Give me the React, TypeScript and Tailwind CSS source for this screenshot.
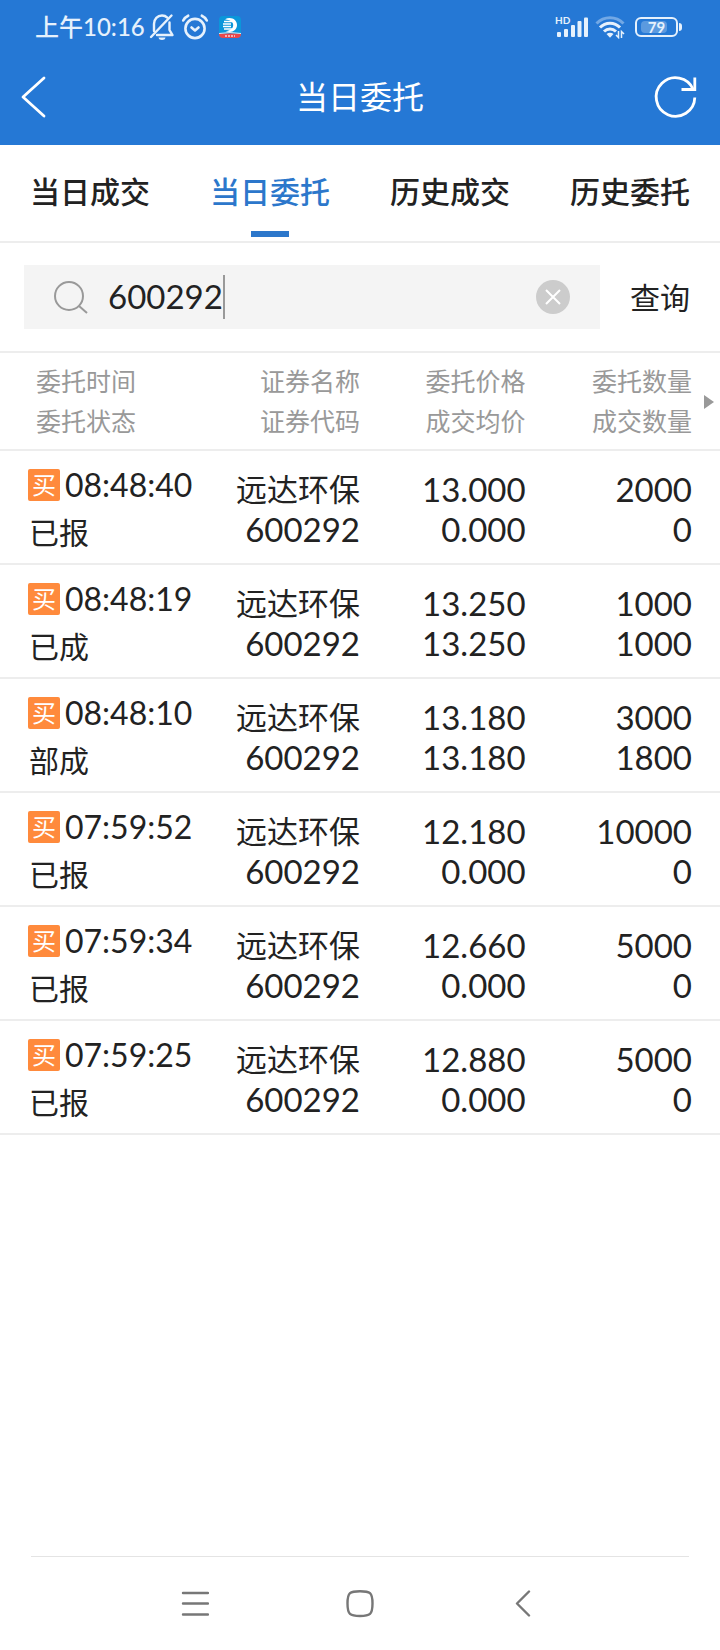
import React, { useState } from 'react';

type Order = {
    time: string;
    status: string;
    name: string;
    code: string;
    price: string;
    avgPrice: string;
    amount: string;
    dealAmount: string;
};

const orders: Order[] = [
    { time: '08:48:40', status: '已报', name: '远达环保', code: '600292', price: '13.000', avgPrice: '0.000', amount: '2000', dealAmount: '0' },
    { time: '08:48:19', status: '已成', name: '远达环保', code: '600292', price: '13.250', avgPrice: '13.250', amount: '1000', dealAmount: '1000' },
    { time: '08:48:10', status: '部成', name: '远达环保', code: '600292', price: '13.180', avgPrice: '13.180', amount: '3000', dealAmount: '1800' },
    { time: '07:59:52', status: '已报', name: '远达环保', code: '600292', price: '12.180', avgPrice: '0.000', amount: '10000', dealAmount: '0' },
    { time: '07:59:34', status: '已报', name: '远达环保', code: '600292', price: '12.660', avgPrice: '0.000', amount: '5000', dealAmount: '0' },
    { time: '07:59:25', status: '已报', name: '远达环保', code: '600292', price: '12.880', avgPrice: '0.000', amount: '5000', dealAmount: '0' },
];

const tabs = ['当日成交', '当日委托', '历史成交', '历史委托'];

const StatusBar: React.FC = () => (
    <div className="flex h-[54px] items-center justify-between pl-[35px] pr-[38px] text-[#e6f1fc]">
        <div className="flex items-center">
            <span className="text-2xl font-medium">上午10:16</span>
            {/* Muted bell */}
            <svg className="ml-1 shrink-0" width="26" height="28" viewBox="0 0 26 28" fill="none" stroke="currentColor" strokeWidth="2.400" strokeLinecap="round" strokeLinejoin="round">
                <path d="M5 18V11C5 6 8.500 2.500 13 2.500C15 2.500 17 3.300 18.300 4.600" />
                <path d="M20.500 9.500V17L23.500 22H8" />
                <path d="M2 24L22.500 2.500" />
                <path d="M9.500 24.500H16.500C16 26.300 15 27 13 27S10 26.300 9.500 24.500Z" fill="currentColor" stroke="none" />
            </svg>
            {/* Alarm */}
            <svg className="ml-[6px] shrink-0" width="28" height="28" viewBox="0 0 28 28" fill="none" stroke="currentColor" strokeWidth="2.600" strokeLinecap="round" strokeLinejoin="round">
                <circle cx="14" cy="15.500" r="9.600" />
                <path d="M10.500 14.500L14 17.500L17.500 14.500" />
                <path d="M2.200 7.500C3.200 5.300 5 3.700 7.200 2.700M25.800 7.500C24.800 5.300 23 3.700 20.800 2.700" />
            </svg>
            {/* Broker app notification */}
            <svg className="ml-[10px] shrink-0" width="22" height="22" viewBox="0 0 22 22">
                <rect width="22" height="22" rx="4" fill="#0b96da" />
                <path d="M0 17.500H22V18A4 4 0 0 1 18 22H4A4 4 0 0 1 0 18Z" fill="#e8474c" />
                <path d="M0 17.500Q11 15.500 22 17.500" stroke="#d7ecf7" strokeWidth="1" fill="none" />
                <path d="M6 3.200C12 .2 18 3.500 18 9S12.500 17.500 6.500 15C11 15 14.200 12.500 14.200 9S11 4.200 6 3.200Z" fill="#fff" />
                <path d="M5 5.500H14M4 8H12M4 10.500H12M5 13H13" stroke="#fff" strokeWidth="1.300" />
                <path d="M6 20H16" stroke="#fbd3d4" strokeWidth="1.500" strokeDasharray="2 1" />
            </svg>
        </div>
        <div className="flex items-center">
            {/* Signal */}
            <svg className="shrink-0" width="34" height="24" viewBox="0 0 34 24" fill="currentColor">
                <text x="0" y="9" fontSize="10" fontWeight="700">HD</text>
                <rect x="2" y="17" width="4" height="5" rx="1" />
                <rect x="9" y="14" width="4" height="8" rx="1" />
                <rect x="16" y="10" width="4" height="12" rx="1" />
                <rect x="22.500" y="6" width="4" height="16" rx="1" />
                <rect x="29" y="2.500" width="4" height="19.500" rx="1" />
            </svg>
            {/* Wifi */}
            <svg className="ml-[6px] shrink-0" width="30" height="24" viewBox="0 0 30 24" fill="none" stroke="currentColor" strokeWidth="3">
                <path d="M1.500 8.500C9 .8 21 .8 28.500 8.500" opacity="0.400" />
                <path d="M5 12.500C10.500 6.800 19.500 6.800 25 12.500" />
                <path d="M9 16.500C12.500 13 17.500 13 21 16.500" />
                <path d="M11.500 19C13.500 17.300 16.500 17.300 18.500 19L15 22.800Z" fill="currentColor" stroke="none" />
                <path d="M23.500 16V22.500L21 20M26.500 23V16.500L29 19" strokeWidth="1.500" />
            </svg>
            {/* Battery */}
            <div className="relative ml-[10px] flex h-5 w-[43px] items-center justify-center rounded-md border-2 border-current">
                <span className="absolute inset-y-[2px] left-1 w-[26px] rounded-sm bg-white/25" />
                <span className="relative text-[15px] font-bold leading-4">79</span>
            </div>
            <span className="ml-px h-2 w-[3px] rounded-r-sm bg-current" />
        </div>
    </div>
);

const OrderRow: React.FC<{ order: Order }> = ({ order }) => (
    <tr className="border-b-2 border-[#ededed] align-top text-[33px] leading-10">
        <td className="pb-2 pl-7 pt-[10px]">
            <div className="flex h-12 items-center gap-[5px] text-[32px]">
                <span className="flex size-8 shrink-0 items-center justify-center rounded-xs bg-[#ff8a3c] text-2xl leading-8 text-white">买</span>
                {order.time}
            </div>
            <div className="pl-px text-[30px] leading-[46px]">{order.status}</div>
        </td>
        <td className="pt-[18px] text-right">
            <div className="text-[31px]">{order.name}</div>
            <div>{order.code}</div>
        </td>
        <td className="pt-[18px] text-right">
            <div>{order.price}</div>
            <div>{order.avgPrice}</div>
        </td>
        <td className="pr-7 pt-[18px] text-right">
            <div>{order.amount}</div>
            <div>{order.dealAmount}</div>
        </td>
    </tr>
);

const App: React.FC = () => {
    const [activeTab, setActiveTab] = useState('当日委托');
    const [keyword, setKeyword] = useState('600292');

    return (
        <div className="flex min-h-screen flex-col bg-white font-['Lato','Noto_Sans_CJK_SC',sans-serif] text-[#222]">
            <header className="bg-[#2578d5] pb-[5px] text-white">
                <StatusBar />
                <div className="flex h-[86px] items-center justify-between px-5">
                    <button type="button" aria-label="返回">
                        <svg width="44" height="44" viewBox="0 0 44 44" fill="none" stroke="currentColor" strokeWidth="2.800" strokeLinecap="round" strokeLinejoin="round">
                            <path d="M24 3L3 22L24 41" />
                        </svg>
                    </button>
                    <h1 className="text-[32px] leading-10">当日委托</h1>
                    <button type="button" aria-label="刷新">
                        <svg className="overflow-visible" width="44" height="44" viewBox="0 0 44 44" fill="none" stroke="currentColor" strokeWidth="2.800">
                            <path d="M38.800 22.500A19.300 19.300 0 1 1 37.300 14.500" />
                            <path d="M38.800 2.500V14.500H25.500" />
                        </svg>
                    </button>
                </div>
            </header>

            <nav className="grid grid-cols-4 border-b-2 border-[#ededed]">
                {tabs.map((tab) => (
                    <button
                        type="button"
                        key={tab}
                        onClick={() => setActiveTab(tab)}
                        className={`flex h-24 flex-col items-center justify-end pb-1 text-[30px] font-medium leading-10 ${tab === activeTab ? 'text-[#2c77cb]' : ''}`}
                    >
                        {tab}
                        <span className={`mt-5 h-[6px] w-[38px] ${tab === activeTab ? 'bg-[#2c77cb]' : ''}`} />
                    </button>
                ))}
            </nav>

            <form className="flex items-center border-b-2 border-[#ededed] py-[22px] pl-6" onSubmit={(e) => e.preventDefault()}>
                <div className="flex h-16 min-w-0 flex-1 items-center bg-[#f4f4f4] pl-[29px] pr-[30px]">
                    <svg className="shrink-0" width="36" height="36" viewBox="0 0 36 36" fill="none" stroke="#999" strokeWidth="2">
                        <circle cx="16" cy="17" r="14" />
                        <path d="M26 27L34 34" />
                    </svg>
                    <input
                        type="text"
                        aria-label="证券代码"
                        value={keyword}
                        onChange={(e) => setKeyword(e.target.value)}
                        className="ml-[19px] h-11 text-[33px] caret-transparent outline-none field-sizing-content"
                    />
                    <span className="h-11 w-[2px] bg-[#999]" />
                    <button type="button" aria-label="清除" className="ml-auto" onClick={() => setKeyword('')}>
                        <svg width="34" height="34" viewBox="0 0 34 34">
                            <circle cx="17" cy="17" r="17" fill="#ccc" />
                            <path d="M10 10L24 24M24 10L10 24" stroke="#fff" strokeWidth="2" />
                        </svg>
                    </button>
                </div>
                <button type="submit" className="w-[120px] shrink-0 text-[30px] leading-10">查询</button>
            </form>

            <div className="relative">
                <table className="w-full table-fixed">
                    <thead>
                        <tr className="border-b-2 border-[#ededed] text-right text-[25px] leading-10 text-[#999]">
                            <th className="w-[28%] py-2 pl-9 text-left font-normal">委托时间<br />委托状态</th>
                            <th className="w-[22%] py-2 font-normal">证券名称<br />证券代码</th>
                            <th className="w-[23%] py-2 font-normal">委托价格<br />成交均价</th>
                            <th className="w-[27%] py-2 pr-7 font-normal">委托数量<br />成交数量</th>
                        </tr>
                    </thead>
                    <tbody>
                        {orders.map((order) => (
                            <OrderRow key={order.time} order={order} />
                        ))}
                    </tbody>
                </table>
                {/* More columns to the right */}
                <svg className="absolute right-[6px] top-[42px]" width="10" height="14" viewBox="0 0 10 14" fill="#999">
                    <path d="M0 0L10 7L0 14Z" />
                </svg>
            </div>

            <footer className="mt-auto px-[31px]">
                <div className="grid h-[94px] grid-cols-3 items-center justify-items-center border-t border-[#e4e4e4] px-[82px] text-[#777]">
                    <button type="button" aria-label="菜单">
                        <svg width="28" height="28" viewBox="0 0 28 28" stroke="currentColor" strokeWidth="2.400" strokeLinecap="round">
                            <path d="M2 3H27M2 13.500H27M2 24.500H27" />
                        </svg>
                    </button>
                    <button type="button" aria-label="主页">
                        <svg width="28" height="28" viewBox="0 0 28 28" fill="none" stroke="currentColor" strokeWidth="2.400">
                            <path d="M14 1.200C24 1.200 26.500 2.500 26.500 13.500S24 26 14 26S1.500 24.500 1.500 13.500S4 1.200 14 1.200Z" />
                        </svg>
                    </button>
                    <button type="button" aria-label="后退">
                        <svg width="28" height="28" viewBox="0 0 28 28" fill="none" stroke="currentColor" strokeWidth="2.400" strokeLinecap="round" strokeLinejoin="round">
                            <path d="M18 1.500L6 13.500L18 25.500" />
                        </svg>
                    </button>
                </div>
            </footer>
        </div>
    );
};

export default App;
